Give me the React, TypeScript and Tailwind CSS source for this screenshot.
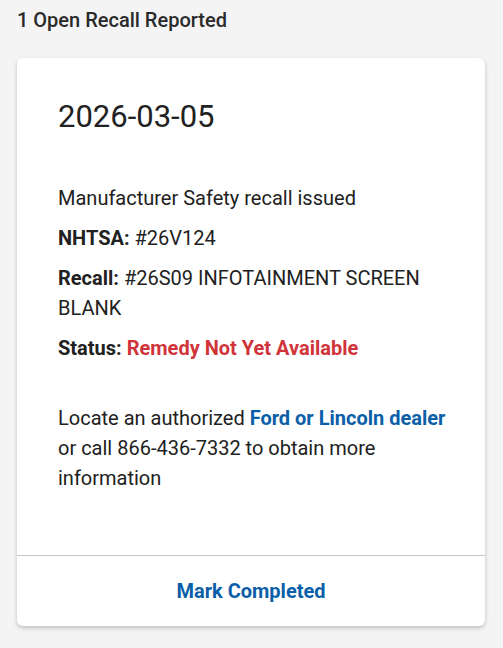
export default function App() {
  return (
    <div className="min-h-[648px] bg-[#f4f4f4] px-[17px] pt-[8px] pb-6 font-['Roboto',sans-serif] text-[#212121]">
      <h2 className="text-[20px] leading-[24px] font-medium text-[#2a2a2a]">1 Open Recall Reported</h2>

      <div className="mt-[26px] w-[468px] rounded-[6px] bg-white shadow-[0_2px_4px_rgba(0,0,0,0.22)]">
        <div className="pl-[41px] pr-[28px] pt-[41px] pb-[62px]">
          <div className="text-[31px] leading-[36px] text-[#222]">2026-03-05</div>

          <div className="mt-[48px] space-y-[10px] text-[20px] leading-[30px]">
            <p>Manufacturer Safety recall issued</p>
            <p>
              <span className="font-bold">NHTSA:</span> #26V124
            </p>
            <p>
              <span className="font-bold">Recall:</span> #26S09 INFOTAINMENT SCREEN BLANK
            </p>
            <p>
              <span className="font-bold">Status:</span>{" "}
              <span className="font-bold text-[#d0343a]">Remedy Not Yet Available</span>
            </p>
          </div>

          <p className="mt-[40px] text-[20px] leading-[30px]">
            Locate an authorized <a className="font-bold text-[#0b5fa8]">Ford or Lincoln dealer</a> or call
            866-436-7332 to obtain more information
          </p>
        </div>

        <div className="border-t border-[#c4c4c4]">
          <button className="flex h-[70px] w-full items-center justify-center text-[20px] font-bold text-[#0b5fa8]">
            Mark Completed
          </button>
        </div>
      </div>
    </div>
  )
}
